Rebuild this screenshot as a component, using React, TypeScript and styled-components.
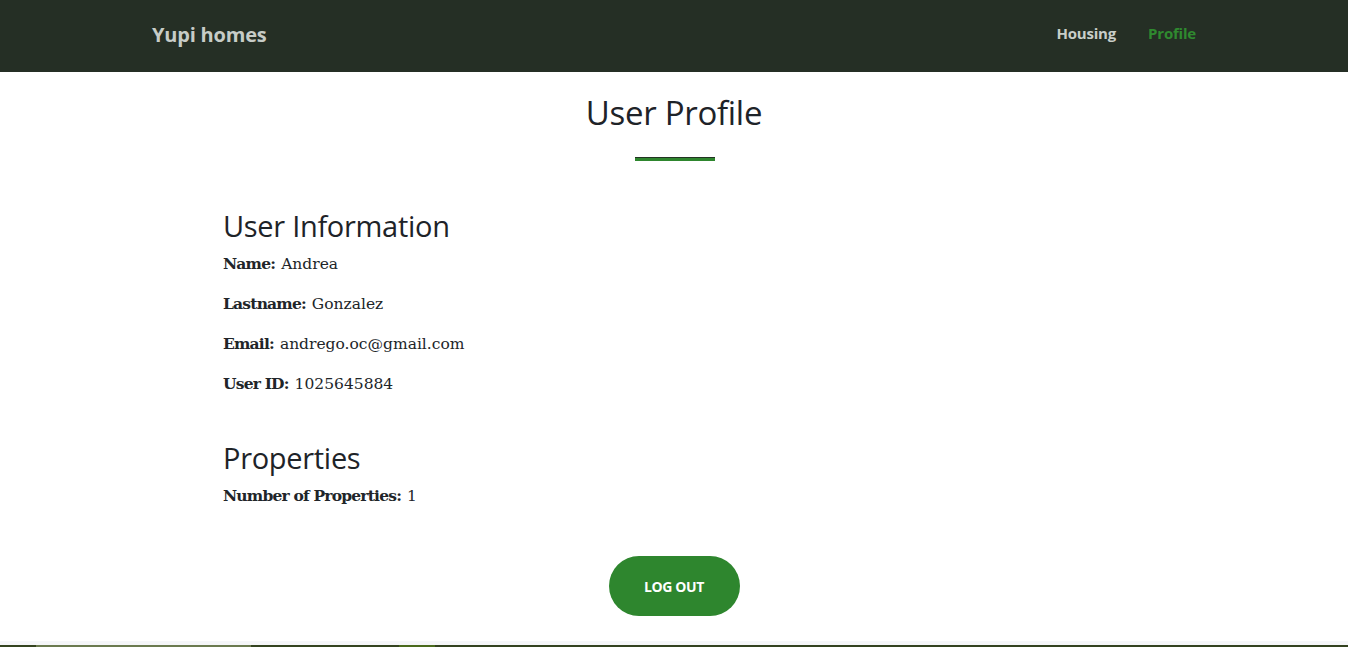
import React from "react";
import styled, { createGlobalStyle } from "styled-components";

const Global = createGlobalStyle`
  html, body { margin: 0; padding: 0; background: #fff; }
  body { font-family: "DejaVu Serif", serif; color: #212529; }
  * { box-sizing: border-box; }
`;

const Page = styled.div`
  height: 647px;
  display: flex;
  flex-direction: column;
  overflow: hidden;
`;

const NavBar = styled.header`
  height: 72px;
  flex: 0 0 72px;
  background: #252f25;
  display: flex;
  align-items: center;
  justify-content: space-between;
  padding: 0 152px 4px 152px;
`;

const Brand = styled.div`
  font-family: "Open Sans", sans-serif;
  font-weight: 700;
  font-size: 20px;
  color: #c7ccc7;
  letter-spacing: -0.2px;
`;

const NavLinks = styled.nav`
  display: flex;
  gap: 32px;
  padding-bottom: 2px;
`;

const NavLink = styled.a<{ $active?: boolean }>`
  font-family: "Open Sans", sans-serif;
  font-weight: 700;
  font-size: 15px;
  color: ${(p) => (p.$active ? "#2f8a2f" : "#c9cec9")};
  text-decoration: none;
  letter-spacing: -0.2px;
`;

const Main = styled.main`
  flex: 1;
  display: flex;
  flex-direction: column;
  align-items: center;
  padding-top: 24px;
`;

const Title = styled.h1`
  font-family: "Open Sans", sans-serif;
  font-weight: 400;
  font-size: 33px;
  margin: 0;
  line-height: 1;
  color: #1e2328;
  letter-spacing: -0.3px;
`;

const Divider = styled.div`
  width: 80px;
  height: 4px;
  margin: 28px 0 0 2px;
  background: #2e862e;
  border-top: 1px solid #223322;
`;

const Content = styled.section`
  width: 902px;
  margin-top: 50px;
`;

const SectionTitle = styled.h2<{ $gap?: number }>`
  font-family: "Open Sans", sans-serif;
  font-weight: 400;
  font-size: 29px;
  line-height: 1;
  margin: ${(p) => p.$gap ?? 0}px 0 12px;
  color: #1e2328;
  letter-spacing: -0.3px;
`;

const Field = styled.p<{ $last?: boolean }>`
  font-size: 15.5px;
  line-height: 24px;
  margin: ${(p) => (p.$last ? "2px 0 0" : "0 0 16px")};
  color: #212529;
`;

const Label = styled.strong`
  font-weight: 700;
  letter-spacing: -0.8px;
  margin-right: 1px;
`;

const Actions = styled.div`
  display: flex;
  justify-content: center;
  margin-top: 48px;
`;

const Button = styled.button`
  width: 131px;
  height: 60px;
  border-radius: 30px;
  border: none;
  background: #2e862e;
  color: #fff;
  font-family: "Open Sans", sans-serif;
  font-weight: 700;
  font-size: 14px;
  letter-spacing: -0.4px;
  text-transform: uppercase;
  cursor: pointer;
`;

const Footer = styled.footer`
  margin-top: auto;
  flex: 0 0 6px;
  border-top: 4px solid #f5f6f8;
  height: 6px;
  display: flex;
`;

const Strip = styled.div<{ $w: number; $c: string }>`
  flex: ${(p) => p.$w} 0 0;
  background: ${(p) => p.$c};
`;

export default function App() {
  return (
    <Page>
      <Global />
      <NavBar>
        <Brand>Yupi homes</Brand>
        <NavLinks>
          <NavLink href="#">Housing</NavLink>
          <NavLink href="#" $active>
            Profile
          </NavLink>
        </NavLinks>
      </NavBar>
      <Main>
        <Title>User Profile</Title>
        <Divider />
        <Content>
          <SectionTitle>User Information</SectionTitle>
          <Field>
            <Label>Name:</Label> Andrea
          </Field>
          <Field>
            <Label>Lastname:</Label> Gonzalez
          </Field>
          <Field>
            <Label>Email:</Label> andrego.oc@gmail.com
          </Field>
          <Field>
            <Label>User ID:</Label> 1025645884
          </Field>
          <SectionTitle $gap={47}>Properties</SectionTitle>
          <Field $last>
            <Label>Number of Properties:</Label> 1
          </Field>
        </Content>
        <Actions>
          <Button>Log out</Button>
        </Actions>
      </Main>
      <Footer>
        <Strip $w={36} $c="#34431f" />
        <Strip $w={215} $c="#6b7a4f" />
        <Strip $w={148} $c="#34431f" />
        <Strip $w={36} $c="#4a6a1c" />
        <Strip $w={913} $c="#33421f" />
      </Footer>
    </Page>
  );
}
